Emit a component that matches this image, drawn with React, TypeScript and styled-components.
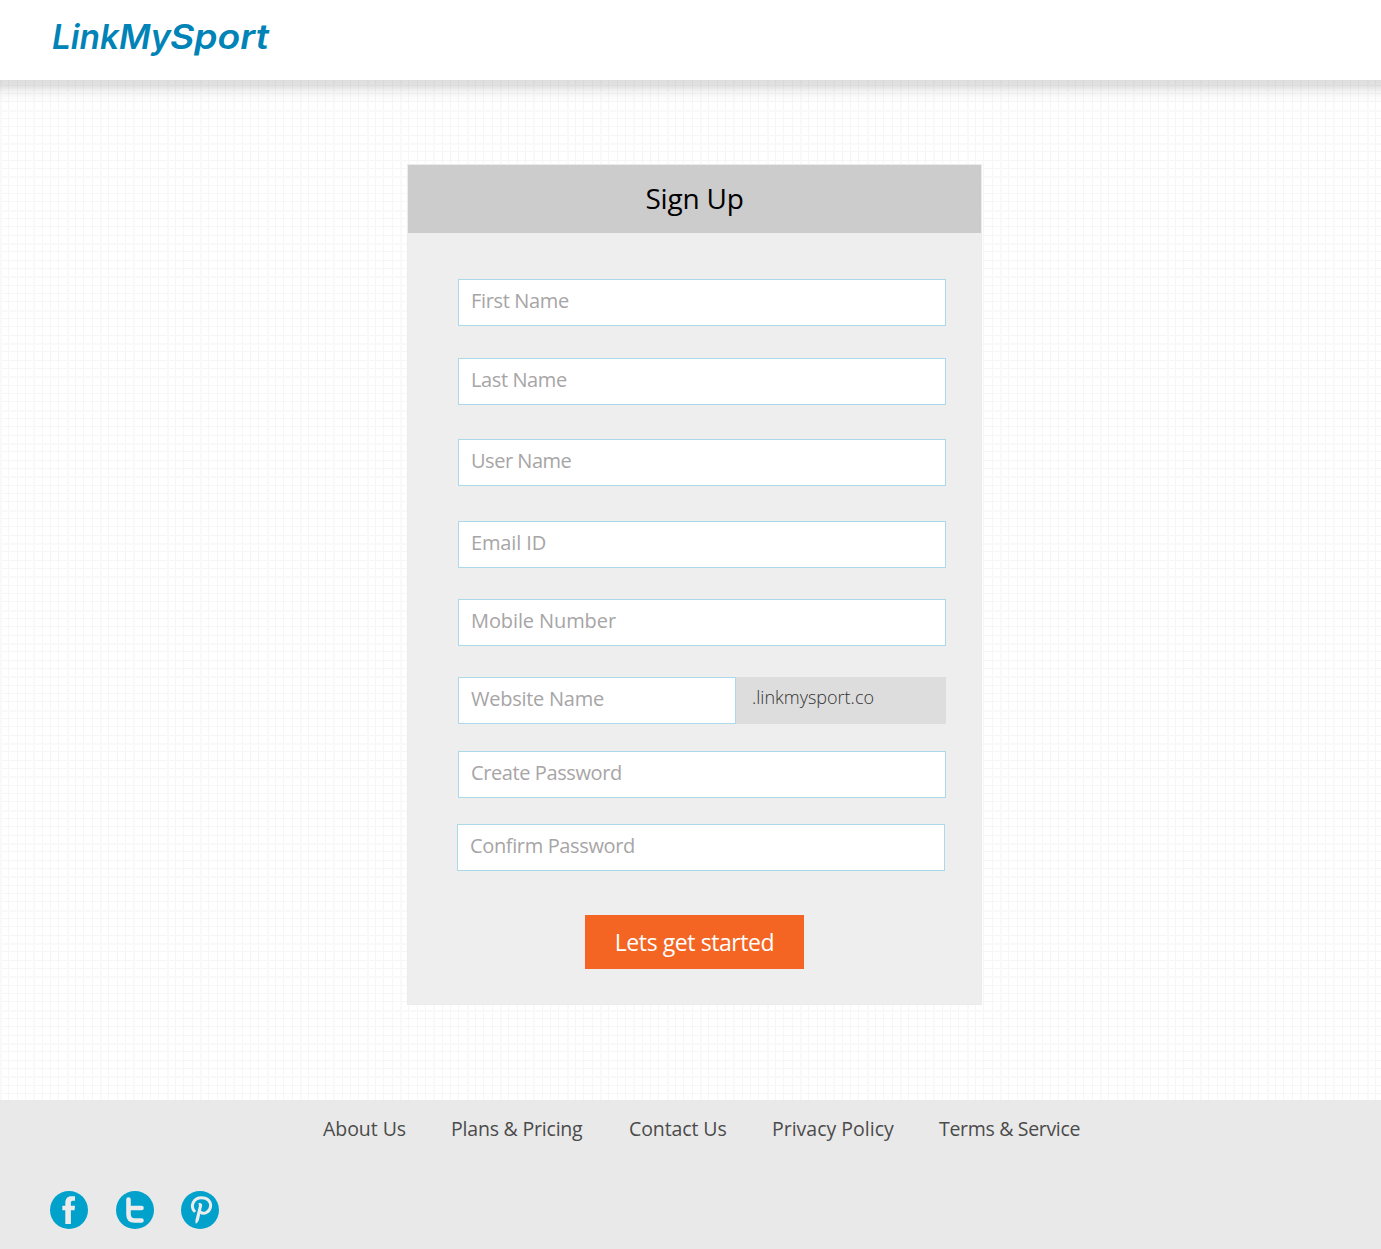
import React from 'react';
import styled, { createGlobalStyle } from 'styled-components';

const Global = createGlobalStyle`
  * { box-sizing: border-box; }
  body { margin: 0; font-family: 'Open Sans', 'Noto Sans', sans-serif; }
`;

const Page = styled.div`
  display: flex;
  flex-direction: column;
  height: 1249px;
  background: #fff;
`;

const Header = styled.header`
  height: 80px;
  flex: none;
  padding: 16px 0 0 48px;
  background: #fff;
`;

const Logo = styled.svg`
  display: block;
  font-family: Inter, sans-serif;
  font-size: 34px;
  font-weight: 600;
  font-style: italic;
  fill: #0083b6;
`;

const Main = styled.main`
  flex: 1;
  display: flex;
  justify-content: center;
  align-items: flex-start;
  padding: 84px 0 0 8px;
  background:
    linear-gradient(rgba(0, 0, 0, 0.135), rgba(0, 0, 0, 0.11) 6px, rgba(0, 0, 0, 0.045) 12px, rgba(0, 0, 0, 0.015) 18px, transparent 24px),
    linear-gradient(90deg, #f9f9f9 2px, transparent 2px 33px, #f9f9f9 33px 35px, transparent 35px 67px, #f9f9f9 67px 69px, transparent 69px) 0 0 / 100px 100%,
    linear-gradient(#f9f9f9 2px, transparent 2px 33px, #f9f9f9 33px 35px, transparent 35px 67px, #f9f9f9 67px 69px, transparent 69px) 0 -37px / 100% 100px,
    linear-gradient(90deg, #f6f6f6 1px, transparent 1px 8px, #f6f6f6 8px 9px, transparent 9px 17px, #f6f6f6 17px 18px, transparent 18px) 0 0 / 25px 100%,
    linear-gradient(#f6f6f6 1px, transparent 1px 8px, #f6f6f6 8px 9px, transparent 9px 17px, #f6f6f6 17px 18px, transparent 18px) 0 -12px / 100% 25px,
    #fff;
`;

const Card = styled.form`
  width: 575px;
  height: 841px;
  border: 1px solid #ebebeb;
  background: #eee;
  display: flex;
  flex-direction: column;
`;

const Title = styled.h1`
  margin: 0;
  height: 68px;
  flex: none;
  background: #ccc;
  color: #000;
  font-size: 28px;
  font-weight: 400;
  line-height: 67px;
  letter-spacing: -0.2px;
  text-align: center;
`;

const Row = styled.div<{ $gap: number; $shift?: number }>`
  display: flex;
  height: 47px;
  width: 488px;
  margin: ${(p) => p.$gap}px 0 0 ${(p) => 50 - (p.$shift ?? 0)}px;
`;

const Input = styled.input<{ $spacing: number }>`
  flex: 1;
  min-width: 0;
  height: 47px;
  border: 1px solid #acd8ea;
  background: #fff;
  padding: 0 12px 5px;
  font-family: 'Open Sans', 'Noto Sans', sans-serif;
  font-size: 20px;
  letter-spacing: ${(p) => p.$spacing}px;
  outline: 0;
  border-radius: 0;
  &::placeholder { color: #a7a5a6; opacity: 1; }
`;

const Suffix = styled.span`
  width: 210px;
  background: #ddd;
  padding-left: 16px;
  font: 300 18px/41px 'Open Sans', sans-serif;
  color: #333;
`;

const Submit = styled.button`
  width: 219px;
  height: 54px;
  margin: 44px 0 0 177px;
  padding: 0;
  border: 0;
  background: #f46523;
  color: #fff;
  font-family: 'Open Sans', 'Noto Sans', sans-serif;
  font-size: 23px;
  letter-spacing: -0.42px;
  line-height: 54px;
`;

const Footer = styled.footer`
  height: 149px;
  flex: none;
  background: #e9e9e9;
`;

const Nav = styled.nav`
  display: flex;
  padding: 14px 0 0 323px;
  height: 91px;
`;

const NavLink = styled.a<{ $width: number; $spacing: number }>`
  width: ${(p) => p.$width}px;
  letter-spacing: ${(p) => p.$spacing}px;
  white-space: nowrap;
  color: #4b4b4b;
  font-size: 19.5px;
  line-height: 30px;
`;

const Social = styled.div`
  display: flex;
  gap: 27.7px;
  padding-left: 50px;
`;

const Icon = styled.svg`
  width: 38px;
  height: 38px;
  display: block;
`;

const fields = [
  { label: 'First Name', gap: 46, spacing: -0.35 },
  { label: 'Last Name', gap: 32, spacing: -0.4 },
  { label: 'User Name', gap: 34, spacing: -0.48 },
  { label: 'Email ID', gap: 35, spacing: -0.13 },
  { label: 'Mobile Number', gap: 31, spacing: -0.1 },
  { label: 'Website Name', gap: 31, spacing: -0.26, suffix: '.linkmysport.co' },
  { label: 'Create Password', gap: 27, spacing: -0.4 },
  { label: 'Confirm Password', gap: 26, spacing: -0.36, shift: 1 },
];

const links = [
  { label: 'About Us', width: 128, spacing: -0.05 },
  { label: 'Plans & Pricing', width: 178, spacing: -0.2 },
  { label: 'Contact Us', width: 143, spacing: -0.1 },
  { label: 'Privacy Policy', width: 167, spacing: 0 },
  { label: 'Terms & Service', width: 150, spacing: -0.32 },
];

export default function App() {
  return (
    <Page>
      <Global />
      <Header>
        <Logo width="230" height="46">
          <text x="4" y="33" textLength="67" lengthAdjust="spacingAndGlyphs">Link</text>
          <text x="71" y="33" textLength="52" lengthAdjust="spacingAndGlyphs">My</text>
          <text x="122" y="33" textLength="99" lengthAdjust="spacingAndGlyphs">Sport</text>
        </Logo>
      </Header>
      <Main>
        <Card>
          <Title>Sign Up</Title>
          {fields.map((f) => (
            <Row key={f.label} $gap={f.gap} $shift={f.shift}>
              <Input placeholder={f.label} $spacing={f.spacing} />
              {f.suffix && <Suffix>{f.suffix}</Suffix>}
            </Row>
          ))}
          <Submit type="button">Lets get started</Submit>
        </Card>
      </Main>
      <Footer>
        <Nav>
          {links.map((l) => (
            <NavLink key={l.label} $width={l.width} $spacing={l.spacing}>{l.label}</NavLink>
          ))}
        </Nav>
        <Social>
          <Icon viewBox="0 0 38 38">
            <circle cx="19" cy="19" r="19" fill="#00a1cb" />
            <path d="M15.300 33V19.300h-3v-4.500h3v-2.600c0-4.600 2.200-6.900 6-6.900H25v4.500h-2.200c-1.300 0-1.900.7-1.900 2v3H25l-.4 4.500h-3.700V33z" fill="#ececec" />
          </Icon>
          <Icon viewBox="0 0 38 38">
            <circle cx="19" cy="19" r="19" fill="#00a1cb" />
            <path d="M12.500 8.500v14.500c0 4.500 2 6.500 6 6.500H25.500M12.500 17h13" fill="none" stroke="#ececec" strokeWidth="4.600" strokeLinecap="round" />
          </Icon>
          <Icon viewBox="0 0 38 38">
            <circle cx="19" cy="19" r="19" fill="#00a1cb" />
            <path d="M13.300 20c-4-4.500-1.300-13.300 7.200-13.300 6.500 0 9.800 4.300 9 9-1 5.500-6.500 8.300-10.300 5.300" fill="none" stroke="#ececec" strokeWidth="3" strokeLinecap="round" />
            <path d="M17.500 12.300c1.800-.9 4 .2 3.600 2.400L18 28.500c-.6 2-1.500 3.500-3.200 4.200-.7-1.700-.4-3.700.1-5.400l3-12.200z" fill="#ececec" />
          </Icon>
        </Social>
      </Footer>
    </Page>
  );
}
